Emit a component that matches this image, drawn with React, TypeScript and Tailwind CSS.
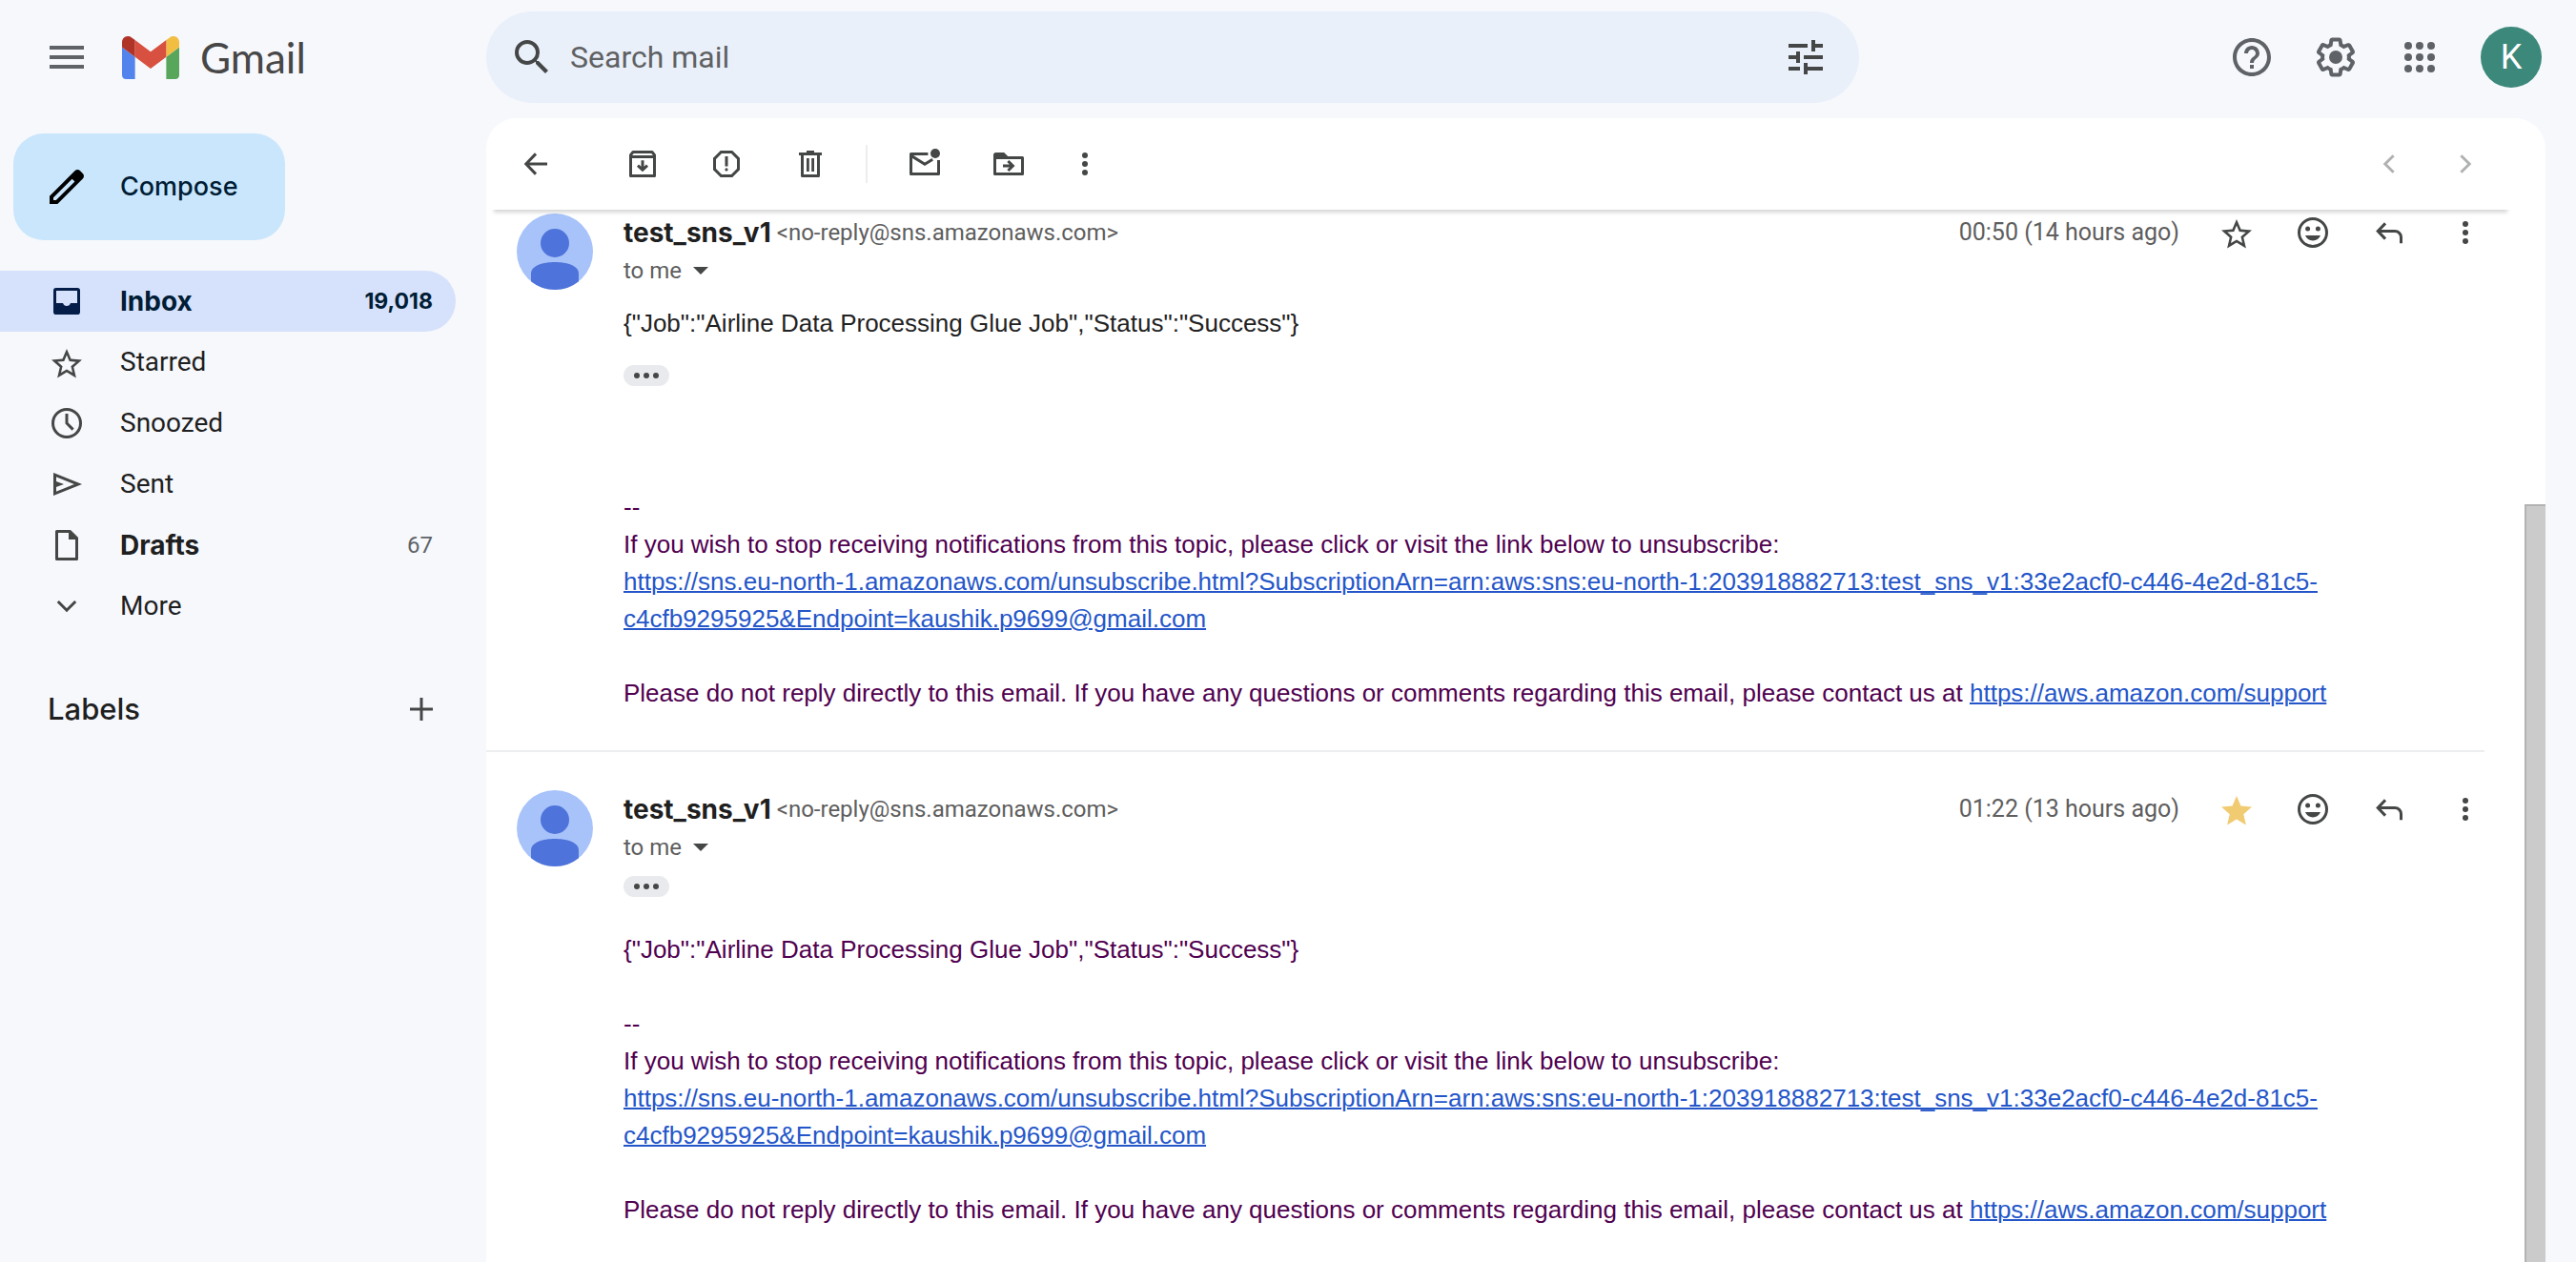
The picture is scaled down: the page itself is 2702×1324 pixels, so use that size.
import React from "react";
import type { ReactNode } from "react";
import { MdHelpOutline, MdSearch, MdTune } from "react-icons/md";

const svg20 = { viewBox: "0 0 20 20", className: "size-10 shrink-0", "aria-hidden": true } as const;
const line = { fill: "none", stroke: "currentColor", strokeWidth: 1.5 } as const;

const InboxIcon = () => (
  <svg {...svg20} fill="currentColor">
    <path
      fillRule="evenodd"
      d="M4.4 3h11.2A1.4 1.4 0 0 1 17 4.4v11.2a1.4 1.4 0 0 1-1.4 1.4H4.4A1.4 1.4 0 0 1 3 15.6V4.4A1.4 1.4 0 0 1 4.4 3zM4.5 4.5V11H8a2.1 2.1 0 0 0 4 0h3.5V4.5z"
    />
  </svg>
);

const StarIcon = ({ filled = false }: { filled?: boolean }) => (
  <svg viewBox="-0.5 -1.75 25 25" className="size-10 shrink-0" fill="currentColor" aria-hidden>
    {filled ? (
      <path d="M12 17.27 18.18 21l-1.64-7.03L22 9.24l-7.19-.61L12 2 9.19 8.63 2 9.24l5.46 4.73L5.82 21z" />
    ) : (
      <path d="M22 9.24l-7.19-.62L12 2 9.19 8.63 2 9.24l5.46 4.73L5.82 21 12 17.27 18.18 21l-1.63-7.03L22 9.24zM12 15.4l-3.76 2.27 1-4.28-3.32-2.88 4.38-.38L12 6.1l1.71 4.04 4.38.38-3.32 2.88 1 4.28L12 15.4z" />
    )}
  </svg>
);

const ClockIcon = () => (
  <svg {...svg20} {...line}>
    <circle cx="10" cy="10" r="7.25" />
    <path d="M10 5v5l3.3 3.3" />
  </svg>
);

const SentIcon = () => (
  <svg {...svg20}>
    <path {...line} d="M3.75 5.1 16 10 3.75 14.9z" />
    <path fill="currentColor" d="M3.75 8.2 8.5 10l-4.75 1.8z" />
  </svg>
);

const DraftIcon = () => (
  <svg {...svg20}>
    <path {...line} strokeLinejoin="round" d="M4.75 2.75H11.7L15.25 6.3v10.95H4.75z" />
    <path fill="currentColor" d="M11 2.2h1l4 4V7h-5z" />
  </svg>
);

const ChevronDown = () => (
  <svg {...svg20} {...line}>
    <path d="m5.4 7.5 4.6 4.6 4.6-4.6" />
  </svg>
);

const PlusIcon = () => (
  <svg {...svg20} {...line}>
    <path d="M10 4v12M4 10h12" />
  </svg>
);

const PencilIcon = () => (
  <svg viewBox="0 0 24 24" className="size-12 shrink-0" fill="#000" aria-hidden>
    <path d="M20.41 4.94l-1.35-1.35c-.78-.78-2.05-.78-2.83 0L3 16.82V21h4.18L20.41 7.77c.79-.78.79-2.05 0-2.83zm-14 14.12L5 19v-1.36l9.82-9.82 1.41 1.41-9.82 9.83z" />
  </svg>
);

const MenuIcon = () => (
  <svg viewBox="0 0 24 24" className="size-12" fill="currentColor" aria-hidden>
    <path d="M3 18h18v-2H3zm0-5h18v-2H3zm0-7v2h18V6z" />
  </svg>
);

const GearIcon = () => (
  <svg viewBox="0 0 24 24" className="size-12" fill="currentColor" aria-hidden>
    <path d="M13.85 22.25h-3.7c-.74 0-1.36-.54-1.45-1.27l-.27-1.89c-.27-.14-.53-.29-.79-.46l-1.8.72c-.7.26-1.47-.03-1.81-.65L2.2 15.53c-.35-.66-.2-1.44.36-1.88l1.53-1.19c-.01-.15-.02-.3-.02-.46 0-.15.01-.31.02-.46l-1.52-1.19c-.59-.45-.74-1.26-.37-1.88l1.85-3.19c.34-.62 1.11-.9 1.79-.63l1.81.73c.26-.17.52-.32.78-.46l.27-1.91c.09-.7.71-1.25 1.44-1.25h3.7c.74 0 1.36.54 1.45 1.27l.27 1.89c.27.14.53.29.79.46l1.8-.72c.71-.26 1.48.03 1.82.65l1.84 3.18c.36.66.2 1.44-.36 1.88l-1.52 1.19c.01.15.02.3.02.46s-.01.31-.02.46l1.52 1.19c.56.45.72 1.23.37 1.86l-1.86 3.22c-.34.62-1.11.9-1.8.63l-1.8-.72c-.26.17-.52.32-.78.46l-.27 1.91c-.1.68-.72 1.22-1.46 1.22zm-3.23-2h2.76l.37-2.55.53-.22c.44-.18.88-.44 1.34-.78l.45-.34 2.38.96 1.38-2.4-2.03-1.58.07-.56c.03-.26.06-.51.06-.78s-.03-.53-.06-.78l-.07-.56 2.03-1.58-1.39-2.4-2.39.96-.45-.35c-.42-.32-.87-.58-1.33-.77l-.52-.22-.37-2.55h-2.76l-.37 2.55-.53.21c-.44.19-.88.44-1.34.79l-.45.33-2.38-.95-1.39 2.39 2.03 1.58-.07.56a7 7 0 0 0-.06.79c0 .26.02.53.06.78l.07.56-2.03 1.58 1.38 2.4 2.39-.96.45.35c.43.33.86.58 1.33.77l.53.22.38 2.55z" />
    <circle cx="12" cy="12" r="3.5" />
  </svg>
);

const AppsIcon = () => (
  <svg viewBox="0 0 24 24" className="size-12" fill="currentColor" aria-hidden>
    {[6, 12, 18].map((y) => [6, 12, 18].map((x) => <circle key={`${x}-${y}`} cx={x} cy={y} r="2" />))}
  </svg>
);

const GmailLogo = () => (
  <svg viewBox="52 42 88 66" className="h-[45px] w-[60px]" aria-hidden>
    <path fill="#5383ec" d="M58 108h14V74L52 59v43c0 3.32 2.69 6 6 6" />
    <path fill="#58a55c" d="M120 108h14c3.32 0 6-2.69 6-6V59l-20 15" />
    <path fill="#f1be42" d="M120 48v26l20-15v-8c0-7.42-8.47-11.65-14.4-7.2" />
    <path fill="#d85140" d="M72 74V48l24 18 24-18v26L96 92" />
    <path fill="#b03327" d="M52 51v8l20 15V48l-5.6-4.2c-5.94-4.45-14.4-.22-14.4 7.2" />
  </svg>
);

const BackIcon = () => (
  <svg {...svg20} {...line}>
    <path d="M16 10H5M10 4.7 4.9 10l5.1 5.3" />
  </svg>
);

const ArchiveIcon = () => (
  <svg {...svg20} {...line}>
    <path strokeLinejoin="round" d="M3.75 5.3 5 3.75h10l1.25 1.55v10.95H3.75z" />
    <path d="M3.75 6.25h12.5M10 8.1V13M7.5 10.8l2.5 2.3 2.5-2.3" />
  </svg>
);

const SpamIcon = () => (
  <svg {...svg20}>
    <path {...line} d="M7.2 3.75h5.6l3.45 3.45v5.6l-3.45 3.45H7.2L3.75 12.8V7.2z" />
    <path fill="currentColor" d="M9.25 6h1.5v5.25h-1.5z" />
    <circle fill="currentColor" cx="10" cy="12.95" r=".8" />
  </svg>
);

const TrashIcon = () => (
  <svg {...svg20}>
    <path {...line} strokeLinejoin="round" d="M5.75 5v11.25h8.5V5" />
    <path fill="currentColor" d="M4 4h4V3h4v1h4v1.5H4zM8 7h1.4v7H8zM10.6 7H12v7h-1.4z" />
  </svg>
);

const UnreadIcon = () => (
  <svg {...svg20}>
    <path {...line} strokeLinejoin="round" d="M11.7 4.75H2.75v10.5h14.5V8" />
    <path {...line} d="M2.9 5.7 10 10.1l4.1-2.5" />
    <circle fill="currentColor" cx="15.5" cy="4.5" r="2.5" />
  </svg>
);

const MoveIcon = () => (
  <svg {...svg20}>
    <path {...line} strokeLinejoin="round" d="M2.75 5v10.25h14.5V6.75H2.75" />
    <path fill="currentColor" d="M3.4 4h4.2l2 2v1H2V5.4A1.4 1.4 0 0 1 3.4 4z" />
    <path {...line} d="M7 11h5M9.7 8.5l2.5 2.5-2.5 2.5" />
  </svg>
);

const DotsIcon = () => (
  <svg {...svg20} fill="currentColor">
    <circle cx="10" cy="5.5" r="1.5" />
    <circle cx="10" cy="10" r="1.5" />
    <circle cx="10" cy="14.5" r="1.5" />
  </svg>
);

const SmileIcon = () => (
  <svg {...svg20}>
    <circle {...line} cx="10" cy="10" r="7.25" />
    <circle fill="currentColor" cx="7.3" cy="8" r="1.25" />
    <circle fill="currentColor" cx="12.7" cy="8" r="1.25" />
    <path fill="currentColor" d="M6 11.5h8a4.3 4.3 0 0 1-8 0z" />
  </svg>
);

const ReplyIcon = () => (
  <svg {...svg20} {...line}>
    <path d="M8 5.2 4.1 9.25 8 13.3M4.2 9.25H13a3.25 3.25 0 0 1 3.25 3.25v3.1" />
  </svg>
);

const PrevIcon = () => (
  <svg {...svg20} {...line}>
    <path d="M12.3 5.6 7.9 10l4.4 4.4" />
  </svg>
);

const NextIcon = () => (
  <svg {...svg20} {...line}>
    <path d="M7.7 5.6 12.1 10l-4.4 4.4" />
  </svg>
);

const PersonAvatar = () => (
  <svg viewBox="0 0 40 40" className="size-20 shrink-0" role="img" aria-label="test_sns_v1">
    <circle cx="20" cy="20" r="20" fill="#a8c3fa" />
    <circle cx="20" cy="15.5" r="7.5" fill="#4e73da" />
    <path
      fill="#4e73da"
      d="M7.5 35.6V31.5C7.5 27.2 14 25.5 20 25.5s12.5 1.7 12.5 6v4.1A20 20 0 0 1 20 40a20 20 0 0 1-12.5-4.4z"
    />
  </svg>
);

function IconButton({ label, children }: { label: string; children: ReactNode }) {
  return (
    <button type="button" aria-label={label} className="flex shrink-0 items-center justify-center">
      {children}
    </button>
  );
}

function Header() {
  return (
    <header className="flex h-[124px] shrink-0 items-start pt-3 pr-9">
      <div className="flex h-24 w-[510px] shrink-0 items-center pl-[46px] text-[#5f6368]">
        <IconButton label="Main menu">
          <MenuIcon />
        </IconButton>
        <a href="#inbox" className="ml-[34px] flex items-center gap-[22px]">
          <GmailLogo />
          <span className="font-['Lato'] text-[44px] leading-[48px] text-[#474747]">Gmail</span>
        </a>
      </div>
      <form role="search" className="flex h-24 max-w-[1440px] flex-1 items-center rounded-full bg-[#eaf0fa] pr-8 pl-6 text-[#444746]">
        <IconButton label="Search">
          <MdSearch className="size-12" />
        </IconButton>
        <input
          type="search"
          aria-label="Search mail"
          placeholder="Search mail"
          className="ml-4 min-w-0 flex-1 bg-transparent text-[32px] leading-10 outline-none placeholder:text-[#5f6163] placeholder:opacity-100"
        />
        <IconButton label="Show search options">
          <MdTune className="size-12" />
        </IconButton>
      </form>
      <div className="ml-auto flex h-24 items-center gap-10 text-[#5f6368]">
        <IconButton label="Support">
          <MdHelpOutline className="size-12" />
        </IconButton>
        <IconButton label="Settings">
          <GearIcon />
        </IconButton>
        <IconButton label="Google apps">
          <AppsIcon />
        </IconButton>
        <button type="button" aria-label="Google Account" className="size-16 rounded-full bg-[#3c887a] text-[36px] leading-none text-white">
          K
        </button>
      </div>
    </header>
  );
}

type Folder = { name: string; icon: ReactNode; count?: string; active?: boolean; bold?: boolean };

const folders: Folder[] = [
  { name: "Inbox", icon: <InboxIcon />, count: "19,018", active: true, bold: true },
  { name: "Starred", icon: <StarIcon /> },
  { name: "Snoozed", icon: <ClockIcon /> },
  { name: "Sent", icon: <SentIcon /> },
  { name: "Drafts", icon: <DraftIcon />, count: "67", bold: true },
  { name: "More", icon: <ChevronDown /> },
];

function Sidebar() {
  return (
    <aside className="w-[510px] shrink-0 pt-4 pr-8">
      <button type="button" className="ml-3.5 flex h-28 w-[285px] items-center gap-8 rounded-[32px] bg-[#c9e6fc] pl-8 font-['Inter'] text-[27px] font-medium text-[#001d35]">
        <PencilIcon />
        Compose
      </button>
      <nav className="mt-8">
        {folders.map((f) => (
          <a
            key={f.name}
            href={`#${f.name.toLowerCase()}`}
            className={`flex h-16 items-center gap-9 rounded-r-full pr-6 pl-[50px] ${f.active ? "bg-[#d6e1fb] text-[#041e49]" : "text-[#444746]"}`}
          >
            {f.icon}
            <span className={`flex-1 text-[28px] ${f.bold ? "font-['Inter'] font-bold" : ""} ${f.active ? "text-[#001d35]" : "text-[#1f1f1f]"}`}>
              {f.name}
            </span>
            {f.count && (
              <span className={f.active ? "font-['Inter'] text-[23px] font-bold text-[#001d35]" : "text-[24px] text-[#5f6368]"}>{f.count}</span>
            )}
          </a>
        ))}
      </nav>
      <div className="mt-11 flex h-16 items-center justify-between pr-4 pl-[50px] text-[#444746]">
        <h2 className="font-['Inter'] text-[31px] font-medium text-[#1f1f1f]">Labels</h2>
        <IconButton label="Create new label">
          <PlusIcon />
        </IconButton>
      </div>
    </aside>
  );
}

function Toolbar() {
  return (
    <div className="relative z-10 mr-9 ml-1 flex h-24 shrink-0 items-center bg-white px-7 text-[#444746] shadow-[0_7px_4px_-4px_rgba(0,0,0,0.16)]">
      <IconButton label="Back to Inbox">
        <BackIcon />
      </IconButton>
      <div className="ml-[72px] flex items-center gap-12">
        <IconButton label="Archive">
          <ArchiveIcon />
        </IconButton>
        <IconButton label="Report spam">
          <SpamIcon />
        </IconButton>
        <IconButton label="Delete">
          <TrashIcon />
        </IconButton>
      </div>
      <div className="mr-10 ml-[38px] h-10 w-0.5 bg-[#eceded]" />
      <div className="flex items-center gap-12">
        <IconButton label="Mark as unread">
          <UnreadIcon />
        </IconButton>
        <IconButton label="Move to">
          <MoveIcon />
        </IconButton>
      </div>
      <div className="ml-10">
        <IconButton label="More email options">
          <DotsIcon />
        </IconButton>
      </div>
      <div className="ml-auto flex gap-10 text-[#b0b2b1]">
        <IconButton label="Newer">
          <PrevIcon />
        </IconButton>
        <IconButton label="Older">
          <NextIcon />
        </IconButton>
      </div>
    </div>
  );
}

function TrimmedToggle() {
  return (
    <button type="button" aria-label="Show trimmed content" className="flex h-[22px] w-12 items-center justify-center gap-1 rounded-full bg-[#e8eaed]">
      <span className="size-1.5 rounded-full bg-[#444746]" />
      <span className="size-1.5 rounded-full bg-[#444746]" />
      <span className="size-1.5 rounded-full bg-[#444746]" />
    </button>
  );
}

const unsubscribeUrl =
  "https://sns.eu-north-1.amazonaws.com/unsubscribe.html?SubscriptionArn=arn:aws:sns:eu-north-1:203918882713:test_sns_v1:33e2acf0-c446-4e2d-81c5-c4cfb9295925&Endpoint=kaushik.p9699@gmail.com";
const supportUrl = "https://aws.amazon.com/support";
const payload = '{"Job":"Airline Data Processing Glue Job","Status":"Success"}';

function Footer() {
  return (
    <div className="text-[#500050]">
      <p>--</p>
      <p>If you wish to stop receiving notifications from this topic, please click or visit the link below to unsubscribe:</p>
      <p>
        <a href={unsubscribeUrl} className="text-[#2456c9] underline decoration-2">
          {unsubscribeUrl}
        </a>
      </p>
      <p className="mt-[39px]">
        Please do not reply directly to this email. If you have any questions or comments regarding this email, please contact us at{" "}
        <a href={supportUrl} className="text-[#2456c9] underline decoration-2">
          {supportUrl}
        </a>
      </p>
    </div>
  );
}

function Message({ time, starred, children }: { time: string; starred?: boolean; children: ReactNode }) {
  return (
    <article className="flex gap-8 pr-[42px] pl-8">
      <PersonAvatar />
      <div className="min-w-0 flex-1">
        <div className="flex h-10 items-center text-[#444746]">
          <h3 className="font-['Inter'] text-[28px] font-bold text-[#1f1f1f]">test_sns_v1</h3>
          <span className="ml-1.5 text-[24px] text-[#5e5e5e]">&lt;no-reply@sns.amazonaws.com&gt;</span>
          <div className="ml-auto flex items-center gap-10">
            <time className="text-[25px] text-[#5e5e5e]">{time}</time>
            <button type="button" aria-label="Star" aria-pressed={!!starred} className={starred ? "text-[#f1cb72]" : ""}>
              <StarIcon filled={starred} />
            </button>
            <IconButton label="Add reaction">
              <SmileIcon />
            </IconButton>
            <IconButton label="Reply">
              <ReplyIcon />
            </IconButton>
            <IconButton label="More message options">
              <DotsIcon />
            </IconButton>
          </div>
        </div>
        <button type="button" className="flex h-10 items-center gap-3 text-[24px] text-[#5e5e5e]">
          to me
          <svg viewBox="0 0 16 8" className="h-2 w-4" fill="#444746" aria-hidden>
            <path d="M0 0h16L8 8z" />
          </svg>
        </button>
        <div className="font-['Liberation_Sans'] text-[26px] leading-[39px]">{children}</div>
      </div>
    </article>
  );
}

export default function App() {
  return (
    <div className="flex h-screen flex-col overflow-hidden bg-[#f6f8fc] font-['Roboto',sans-serif]">
      <Header />
      <div className="flex min-h-0 flex-1">
        <Sidebar />
        <main className="mr-8 flex min-w-0 flex-1 flex-col overflow-hidden rounded-t-[32px] bg-white">
          <Toolbar />
          <div className="flex min-h-0 flex-1">
            <div className="min-w-0 flex-1 overflow-hidden pt-1">
              <Message time="00:50 (14 hours ago)">
                <p className="mt-4 text-[#222222]">{payload}</p>
                <div className="mt-6 mb-[108px]">
                  <TrimmedToggle />
                </div>
                <Footer />
              </Message>
              <div className="mt-10 mr-[42px] mb-10 h-0.5 bg-[#eceeef]" />
              <Message time="01:22 (13 hours ago)" starred>
                <div className="mt-2.5 mb-9">
                  <TrimmedToggle />
                </div>
                <p className="mb-[39px] text-[#500050]">{payload}</p>
                <Footer />
              </Message>
            </div>
            <div className="w-[22px] shrink-0 pt-[309px]">
              <div className="h-full border-t-2 border-l-2 border-[#b3b3b3] bg-[#cbcbcb]" />
            </div>
          </div>
        </main>
      </div>
    </div>
  );
}
